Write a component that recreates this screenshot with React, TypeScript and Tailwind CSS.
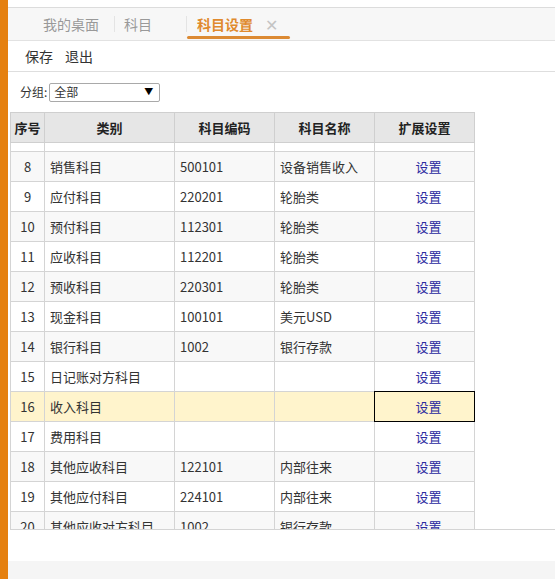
import React from "react";

const rows: [string, string, string, string][] = [
  ["8", "销售科目", "500101", "设备销售收入"],
  ["9", "应付科目", "220201", "轮胎类"],
  ["10", "预付科目", "112301", "轮胎类"],
  ["11", "应收科目", "112201", "轮胎类"],
  ["12", "预收科目", "220301", "轮胎类"],
  ["13", "现金科目", "100101", "美元USD"],
  ["14", "银行科目", "1002", "银行存款"],
  ["15", "日记账对方科目", "", ""],
  ["16", "收入科目", "", ""],
  ["17", "费用科目", "", ""],
  ["18", "其他应收科目", "122101", "内部往来"],
  ["19", "其他应付科目", "224101", "内部往来"],
  ["20", "其他应收对方科目", "1002", "银行存款"],
];

const font = { fontFamily: '"Noto Sans CJK SC", "Noto Sans", sans-serif' };

export default function App() {
  return (
    <div className="flex h-[579px] w-[555px] overflow-hidden bg-white text-[#333]" style={font}>
      <div className="w-[8px] shrink-0 bg-[#e5800f]" />
      <div className="flex flex-1 flex-col min-w-0">
        <div className="h-[8px] border-b border-[#dcdcdc] bg-white" />
        <div className="flex h-[33px] items-stretch border-b border-[#e2e2e2] bg-[#f7f7f7] text-[14px]">
          <div className="flex items-center pl-[35px] pr-[15px] text-[#999]">我的桌面</div>
          <div className="my-[8px] w-px bg-[#e4e4e4]" />
          <div className="flex items-center pl-[9px] pr-[34px] text-[#999]">科目</div>
          <div className="my-[8px] w-px bg-[#e4e4e4]" />
          <div className="relative flex items-center pl-[10px] pr-[12px] font-bold text-[#e08a2e]">
            <span>科目设置</span>
            <span className="ml-[12px] text-[16px] font-normal text-[#c4c4c4]">✕</span>
            <div className="absolute bottom-[1px] left-0 right-0 h-[3px] rounded-sm bg-[#dc8a33]" />
          </div>
        </div>
        <div className="flex h-[31px] items-center gap-[12px] border-b border-[#dedede] pl-[17px] text-[14px]">
          <span>保存</span>
          <span>退出</span>
        </div>
        <div className="flex h-[40px] items-center pl-[12px] text-[12px]">
          <span>分组:</span>
          <div className="ml-[2px] flex h-[19px] w-[111px] items-center justify-between rounded-[2px] border border-[#a9a9a9] bg-white pl-[4px] pr-[6px]">
            <span>全部</span>
            <span className="text-[9px] text-black">▼</span>
          </div>
        </div>
        <div className="ml-[2px] h-[418px] overflow-hidden border-b border-[#d4d4d4]">
          <table className="border-collapse text-[13px]" style={{ tableLayout: "fixed" }}>
            <colgroup>
              <col className="w-[34px]" />
              <col className="w-[130px]" />
              <col className="w-[100px]" />
              <col className="w-[100px]" />
              <col className="w-[100px]" />
            </colgroup>
            <thead>
              <tr className="h-[30px] bg-[#e6e6e6] font-bold">
                {["序号", "类别", "科目编码", "科目名称", "扩展设置"].map((h) => (
                  <th key={h} className="border border-[#cfcfcf] p-0 text-center text-[13px] font-bold text-[#222]">
                    {h}
                  </th>
                ))}
              </tr>
            </thead>
            <tbody>
              <tr className="h-[9px]">
                {[0, 1, 2, 3, 4].map((i) => (
                  <td key={i} className="border border-[#d4d4d4] p-0" />
                ))}
              </tr>
              {rows.map(([n, c, code, name]) => {
                const hl = n === "16";
                const even = parseInt(n) % 2 === 0;
                const bg = hl ? "bg-[#fff4cc]" : even ? "bg-[#f8f8f8]" : "bg-white";
                return (
                  <tr key={n} className={`h-[30px] ${bg}`}>
                    <td className="border border-[#d4d4d4] p-0 text-center">{n}</td>
                    <td className="border border-[#d4d4d4] py-0 pl-[5px] whitespace-nowrap">{c}</td>
                    <td className="border border-[#d4d4d4] py-0 pl-[5px]">{code}</td>
                    <td className="border border-[#d4d4d4] py-0 pl-[5px] whitespace-nowrap">{name}</td>
                    <td className="relative border border-[#d4d4d4] py-0 pl-[8px] pr-0 text-center text-[#2a2aa0]">
                      设置
                      {hl && <div className="absolute inset-[-1px] border border-black" />}
                    </td>
                  </tr>
                );
              })}
            </tbody>
          </table>
        </div>
        <div className="h-[31px] bg-white" />
        <div className="flex-1 bg-[#f5f5f5]" />
      </div>
    </div>
  );
}
